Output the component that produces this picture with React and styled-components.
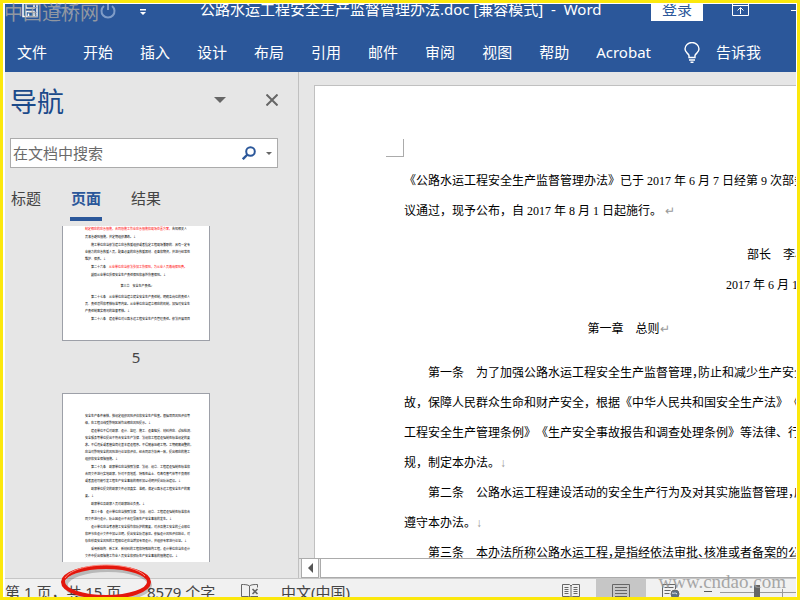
import React, { useState } from "react";
import styled, { createGlobalStyle } from "styled-components";

const GlobalStyle = createGlobalStyle`
  * {
    box-sizing: border-box;
  }

  body {
    margin: 0;
    font-family: "Noto Sans", "Noto Sans CJK SC", sans-serif;
    font-size: 15px;
    color: #444;
  }

  button,
  input {
    font: inherit;
    color: inherit;
    margin: 0;
    padding: 0;
    border: 0;
    background: none;
    white-space: nowrap;
  }

  p,
  h1,
  h2 {
    margin: 0;
    font-weight: normal;
  }
`;

const menuTabs = [
  "开始",
  "插入",
  "设计",
  "布局",
  "引用",
  "邮件",
  "审阅",
  "视图",
  "帮助",
  "Acrobat",
];

const navTabs = ["标题", "页面", "结果"];

const pageFive = [
  {
    red: true,
    continued: true,
    lines: ["制定相应的应急措施，合同段施工作业应急措施和现场处置方案，"],
    tail: "告知相关人",
  },
  { continued: true, lines: ["员紧急避险措施，并定期组织演练。↓"] },
  {
    lines: [
      "施工单位应当依法建立应急救援组织或者指定工程现场兼职的、具有一定专",
      "业能力的应急救援人员，配备必要的应急救援器材、设备和物资，并进行经常性",
      "维护、保养。↓",
    ],
  },
  {
    red: true,
    head: "第二十六条　",
    lines: ["从业单位应当依法参加工伤保险，为从业人员缴纳保险费。"],
  },
  { lines: ["鼓励从业单位投保安全生产责任保险和意外伤害保险。↓"] },
  { center: true, lines: ["第三章　安全生产责任↵"] },
  {
    lines: [
      "第二十七条　从业单位应当建立健全安全生产责任制，明确各岗位的责任人",
      "员、责任范围和考核标准等内容。从业单位应当建立相应的机制，加强对安全生",
      "产责任制落实情况的监督考核。↓",
    ],
  },
  { lines: ["第二十八条　建设单位对公路水运工程安全生产负管理责任。依法开展项目"] },
];

const pageSix = [
  {
    continued: true,
    lines: [
      "安全生产条件审核，按规定组织风险评估和安全生产检查。根据项目风险评估等",
      "级，在工程沿线受影响区域作出相应风险提示。↓",
    ],
  },
  {
    lines: [
      "建设单位不得对勘察、设计、监理、施工、设备租赁、材料供应、试验检测、",
      "安全服务等单位提出不符合安全生产法律、法规和工程建设强制性标准规定的要",
      "求。不得违反或者擅自简化基本建设程序。不得随意压缩工期。工期确需调整的，",
      "应当对影响安全的风险进行论证和评估，经合同双方协商一致，提出相应的施工",
      "组织和安全保障措施。↓",
    ],
  },
  {
    lines: [
      "第二十九条　勘察单位应当按照法律、法规、规章、工程建设强制性标准和",
      "合同文件进行实地勘察，针对不良地质、特殊性岩土、有毒有害气体等不良情形",
      "或者其他可能引发工程生产安全事故的情形加以说明并提出防治建议。↓",
    ],
  },
  {
    lines: [
      "勘察单位提交的勘察文件必须真实、准确，满足公路水运工程安全生产的需",
      "要。↓",
    ],
  },
  { lines: ["勘察单位及勘察人员对勘察结论负责。↓"] },
  {
    lines: [
      "第三十条　设计单位应当按照法律、法规、规章、工程建设强制性标准和合",
      "同文件进行设计，防止因设计不合理导致生产安全事故的发生。↓",
    ],
  },
  {
    lines: [
      "设计单位应当考虑施工安全操作和防护的需要，对涉及施工安全的重点部位",
      "和环节在设计文件中加以注明，提出安全防范意见。依据设计风险评估结论，对",
      "存在较高安全风险的工程部位还应当增加专项设计，并组织专家进行论证。↓",
    ],
  },
  {
    lines: [
      "采用新结构、新工艺、新材料的工程和特殊结构工程，设计单位应当在设计",
      "文件中提出保障施工作业人员安全和预防生产安全事故的措施建议。↓",
    ],
  },
];

const ThumbText = ({ paragraphs }) =>
  paragraphs.map((para) => (
    <ThumbPara
      key={para.lines[0]}
      $indent={!para.continued && !para.center}
      $center={para.center}
    >
      {para.lines.map((line, i) => (
        <ThumbLine key={line}>
          {i === 0 && para.head}
          {para.red ? <RedText>{line}</RedText> : line}
          {para.tail}
        </ThumbLine>
      ))}
    </ThumbPara>
  ));

const TitleBar = () => (
  <TitleRow>
    <QuickAccess>
      <IconButton aria-label="保存">
        <svg width="16" height="16" viewBox="0 0 16 16" fill="none" stroke="#fff">
          <path d="M1 0v12.500h14V0M4 12V7.500h8V12M6.500 12V9.500M4 0v4h8V0" strokeWidth="1.500" />
        </svg>
      </IconButton>
      <IconButton aria-label="撤消">
        <svg width="24" height="14" viewBox="0 0 24 14" fill="none" stroke="#5f82b8">
          <path d="M9 0L3 4l6 5M3 4h10c5 0 7 3 7 7" strokeWidth="2" />
        </svg>
      </IconButton>
      <RedoButton aria-label="重复">
        <svg width="18" height="16" viewBox="0 0 18 16" fill="none" stroke="#7f9cc8">
          <path d="M14 2a6.500 6.500 0 1 1-8 0M10 0v6" strokeWidth="2" />
        </svg>
      </RedoButton>
      <IconButton aria-label="自定义快速访问工具栏">
        <svg width="6" height="12" viewBox="0 0 6 12" fill="#fff">
          <path d="M0 5h6v1.500H0zM0 8h6L3 11z" />
        </svg>
      </IconButton>
    </QuickAccess>
    <Title>公路水运工程安全生产监督管理办法.doc [兼容模式]&nbsp; -&nbsp; Word</Title>
    <WindowTools>
      <SignIn>登录</SignIn>
      <IconButton aria-label="功能区显示选项">
        <svg width="17" height="12" viewBox="0 0 17 12" fill="none" stroke="#fff">
          <path d="M.5 0v11.500h16V0M0 1.500h17M8.500 10V4M5.500 6.500l3-3 3 3" />
        </svg>
      </IconButton>
      <IconButton aria-label="最小化">
        <svg width="5" height="12" viewBox="0 0 5 12" stroke="#fff">
          <path d="M0 6.500h5" />
        </svg>
      </IconButton>
    </WindowTools>
  </TitleRow>
);

const MenuBar = () => (
  <MenuRow>
    <FileTab>文件</FileTab>
    {menuTabs.map((tab) => (
      <MenuTab key={tab}>{tab}</MenuTab>
    ))}
    <TellMe>
      <svg width="16" height="21" viewBox="0 0 16 21" fill="none" stroke="#fff" strokeWidth="1.400">
        <path d="M5 15.500v-2C4.500 11.500 1 10.500 1 7a7 6.500 0 0 1 14 0c0 3.500-3.500 4.500-4 6.500v2zM5 18h6M6.500 20.200h3" />
      </svg>
      告诉我
    </TellMe>
  </MenuRow>
);

const Navigation = () => {
  const [active, setActive] = useState("页面");

  return (
    <NavPane>
      <NavHeader>
        <NavTitle>导航</NavTitle>
        <IconButton aria-label="任务窗格选项">
          <svg width="12" height="6" viewBox="0 0 12 6" fill="#666">
            <path d="M0 0h12L6 6z" />
          </svg>
        </IconButton>
        <IconButton aria-label="关闭">
          <svg width="12" height="12" viewBox="0 0 12 12" stroke="#666" strokeWidth="2">
            <path d="M.5 .5l11 11M11.500 .5l-11 11" />
          </svg>
        </IconButton>
      </NavHeader>
      <SearchBox>
        <SearchInput aria-label="在文档中搜索" placeholder="在文档中搜索" />
        <IconButton aria-label="搜索">
          <svg width="14" height="14" viewBox="0 0 14 14" fill="none" stroke="#2b579a">
            <circle cx="8.500" cy="5.500" r="4.300" strokeWidth="2" />
            <path d="M5.500 8.500L.8 13.200" strokeWidth="2.400" />
          </svg>
        </IconButton>
        <IconButton aria-label="搜索选项">
          <svg width="6" height="3" viewBox="0 0 6 3" fill="#666">
            <path d="M0 0h6L3 3z" />
          </svg>
        </IconButton>
      </SearchBox>
      <NavTabs>
        {navTabs.map((tab) => (
          <NavTab key={tab} $active={tab === active} onClick={() => setActive(tab)}>
            {tab}
          </NavTab>
        ))}
      </NavTabs>
      <Thumbs>
        <Thumb $cutTop>
          <ThumbText paragraphs={pageFive} />
        </Thumb>
        <PageNumber>5</PageNumber>
        <Thumb>
          <ThumbText paragraphs={pageSix} />
        </Thumb>
      </Thumbs>
    </NavPane>
  );
};

const Document = () => (
  <DocPane>
    <Canvas>
      <Page>
        <MarginCorner />
        <Para>
          <Line>《公路水运工程安全生产监督管理办法》已于 2017 年 6 月 7 日经第 9 次部务会</Line>
          <Line>
            议通过，现予公布，自 2017 年 8 月 1 日起施行。 <Mark>↵</Mark>
          </Line>
        </Para>
        <Para $align="right">
          <Line>部长　李小鹏</Line>
          <Line>2017 年 6 月 12 日</Line>
        </Para>
        <Para $align="center">
          <Line $indent>
            第一章　总则<Mark>↵</Mark>
          </Line>
        </Para>
        <Para>
          <Line $indent $tight>
            第一条　为了加强公路水运工程安全生产监督管理，防止和减少生产安全事
          </Line>
          <Line>故，保障人民群众生命和财产安全，根据《中华人民共和国安全生产法》《建设</Line>
          <Line>工程安全生产管理条例》《生产安全事故报告和调查处理条例》等法律、行政法</Line>
          <Line>
            规，制定本办法。<Mark>↓</Mark>
          </Line>
          <Line $indent $tight>
            第二条　公路水运工程建设活动的安全生产行为及对其实施监督管理，应当
          </Line>
          <Line>
            遵守本办法。<Mark>↓</Mark>
          </Line>
          <Line $indent $tight>
            第三条　本办法所称公路水运工程，是指经依法审批、核准或者备案的公路
          </Line>
        </Para>
      </Page>
    </Canvas>
    <ScrollBar>
      <ScrollButton aria-label="向左滚动">
        <svg width="5" height="10" viewBox="0 0 5 10" fill="#555">
          <path d="M5 0v10L0 5z" />
        </svg>
      </ScrollButton>
      <ScrollTrack />
    </ScrollBar>
  </DocPane>
);

const StatusBar = () => {
  const [zoom, setZoom] = useState(49);

  return (
    <StatusRow>
      <StatusItem $width={142}>第 1 页，共 15 页</StatusItem>
      <StatusItem $width={94}>8579 个字</StatusItem>
      <ProofButton aria-label="校对">
        <svg width="18" height="14" viewBox="0 0 18 14" fill="none" stroke="#666">
          <path d="M8.500 13.500V2C7 .5 3 .5.5.5v12h6.500l1.500 1 1.500-1h7M8.500 2c1.500-1.500 5-1.500 8-1.500v3" />
          <path d="M11.500 5l5 5M16.500 5l-5 5" strokeWidth="1.600" />
        </svg>
      </ProofButton>
      <StatusItem $width={72}>中文(中国)</StatusItem>
      <Views>
        <ViewButton aria-label="阅读视图">
          <svg width="18" height="14" viewBox="0 0 18 14" fill="none" stroke="#666">
            <path d="M9 1.500v12M.5.500h7L9 2l1.500-1.500h7v12h-7L9 13.500l-1.500-1H.5z" />
            <path d="M2.500 3.500h4M2.500 5.500h4M2.500 7.500h4M2.500 9.500h4M11.500 3.500h4M11.500 5.500h4M11.500 7.500h4M11.500 9.500h4" />
          </svg>
        </ViewButton>
        <ViewButton aria-label="页面视图" $active>
          <svg width="18" height="14" viewBox="0 0 18 14" fill="none" stroke="#666">
            <path d="M.5.500h17v13H.5zM3 3.500h12M3 6.500h12M3 9.500h12M3 12.500h12" />
          </svg>
        </ViewButton>
        <ViewButton aria-label="Web 版式视图">
          <svg width="18" height="14" viewBox="0 0 18 14" fill="none" stroke="#666">
            <path d="M13.500 5V.500H.5v13h8M2.500 3.500h9M2.500 6.500h6M2.500 9.500h5" />
            <circle cx="13" cy="10" r="4" fill="#5d7184" />
            <path d="M10 9c2 1 3-1 5 1" stroke="#f1f1f1" />
          </svg>
        </ViewButton>
        <ZoomOut aria-label="缩小">
          <svg width="9" height="2" viewBox="0 0 9 2" fill="#444">
            <path d="M0 0h9v1H0z" />
          </svg>
        </ZoomOut>
        <ZoomSlider
          type="range"
          aria-label="显示比例"
          value={zoom}
          onChange={(e) => setZoom(Number(e.target.value))}
        />
      </Views>
    </StatusRow>
  );
};

const App = () => {
  return (
    <Frame lang="zh-CN">
      <GlobalStyle />
      <Ribbon>
        <TitleBar />
        <MenuBar />
      </Ribbon>
      <Workspace>
        <Navigation />
        <Document />
      </Workspace>
      <StatusBar />
      <SiteName>中国道桥网</SiteName>
      <SiteAddress>www.cndao.com</SiteAddress>
      <Circle width="96" height="40" viewBox="0 0 96 40" fill="none">
        <ellipse cx="49" cy="25" rx="42" ry="15" stroke="#000" strokeOpacity=".2" strokeWidth="4" />
        <ellipse cx="47" cy="22" rx="43" ry="15" stroke="#e3170d" strokeWidth="4" />
        <path d="M6 18c6-9 24-13 42-13 16 0 32 4 38 11" stroke="#ff8a80" strokeWidth="1" />
      </Circle>
    </Frame>
  );
};

const Frame = styled.div`
  position: relative;
  display: flex;
  flex-direction: column;
  height: 100vh;
  overflow: hidden;
  border: 3px solid #fce80c;
  padding: 1px 1px 0 2px;
  background: #fff;
`;

const Ribbon = styled.header`
  flex: none;
  background: #2b579a;
  color: #fff;
  overflow: hidden;
`;

const TitleRow = styled.div`
  display: flex;
  align-items: flex-start;
  height: 28px;
  line-height: 10px;
`;

const IconButton = styled.button`
  display: flex;
  flex: none;
`;

const QuickAccess = styled.div`
  display: flex;
  flex: 0 0 195px;
  padding-left: 17px;
  gap: 14px;
`;

const RedoButton = styled(IconButton)`
  margin: 0 10px 0 8px;
`;

const Title = styled.h1`
  font-size: 15px;
  white-space: nowrap;
`;

const WindowTools = styled.div`
  display: flex;
  margin-left: auto;
  gap: 29px;

  button:last-child {
    margin-left: 13px;
  }
`;

const SignIn = styled.button`
  width: 52px;
  height: 17px;
  padding-bottom: 7px;
  background: #fff;
  color: #2b579a;
`;

const MenuRow = styled.nav`
  display: flex;
  align-items: center;
  height: 40px;
  padding: 0 12px;
  gap: 27px;
`;

const MenuTab = styled.button`
  line-height: 24px;
`;

const FileTab = styled(MenuTab)`
  margin-right: 9px;
`;

const TellMe = styled(MenuTab)`
  display: flex;
  align-items: center;
  margin-left: 6px;
  gap: 16px;
`;

const Workspace = styled.main`
  display: flex;
  flex: 1;
  min-height: 0;
  background: #e6e6e6;
`;

const NavPane = styled.aside`
  display: flex;
  flex: none;
  flex-direction: column;
  width: 294px;
  border-right: 1px solid #c0c0c0;
  padding: 8px 20px 16px 5px;
`;

const NavHeader = styled.div`
  display: flex;
  align-items: center;
  height: 40px;
  gap: 40px;
`;

const NavTitle = styled.h2`
  flex: 1;
  font-size: 27px;
  color: #1b4a8a;
`;

const SearchBox = styled.div`
  display: flex;
  flex: none;
  align-items: center;
  height: 30px;
  margin-top: 18px;
  padding: 0 5px 0 2px;
  gap: 10px;
  background: #fff;
  border: 1px solid #ababab;
`;

const SearchInput = styled.input`
  flex: 1;
  min-width: 0;
  outline: none;

  &::placeholder {
    color: #6a6a6a;
    opacity: 1;
  }
`;

const NavTabs = styled.div`
  display: flex;
  flex: none;
  margin-top: 18px;
  gap: 28px;
`;

const NavTab = styled.button`
  height: 35px;
  padding: 0 1px 7px;
  line-height: 24px;
  border-bottom: 4px solid ${({ $active }) => ($active ? "#2b579a" : "transparent")};
  color: ${({ $active }) => ($active ? "#2b579a" : "#444")};
  font-weight: ${({ $active }) => ($active ? 700 : 400)};
`;

const Thumbs = styled.div`
  display: flex;
  flex: 1;
  flex-direction: column;
  align-items: center;
  min-height: 0;
  margin-top: 5px;
  padding-right: 16px;
  overflow: hidden;
`;

const Thumb = styled.div`
  flex: none;
  width: 148px;
  height: ${({ $cutTop }) => ($cutTop ? "115px" : "210px")};
  padding: ${({ $cutTop }) => ($cutTop ? "0" : "19px")} 20px 0 22px;
  border: 1px solid #9da0a8;
  border-top-width: ${({ $cutTop }) => ($cutTop ? "0" : "1px")};
  background: #fff;
  color: #000;
  font-size: 3px;
  font-weight: 500;
  line-height: 7px;
  overflow: hidden;
`;

const ThumbPara = styled.p`
  margin-bottom: ${({ $center }) => ($center ? "4px" : "1px")};
  margin-top: ${({ $center }) => ($center ? "4px" : "0")};
  text-indent: ${({ $indent }) => ($indent ? "6px" : "0")};
  text-align: ${({ $center }) => ($center ? "center" : "left")};
`;

const ThumbLine = styled.span`
  display: block;
  white-space: nowrap;

  & + & {
    text-indent: 0;
  }
`;

const RedText = styled.span`
  color: #f00;
`;

const PageNumber = styled.div`
  flex: none;
  height: 52px;
  line-height: 32px;
`;

const DocPane = styled.section`
  display: flex;
  flex: 1;
  flex-direction: column;
  min-width: 0;
`;

const Canvas = styled.div`
  flex: 1;
  min-height: 0;
  padding: 13px 0 0 15px;
  overflow: hidden;
`;

const Page = styled.article`
  width: 595px;
  min-height: 842px;
  padding: 53px 89px;
  border: 1px solid #c0c0c0;
  background: #fff;
  color: #000;
  font-family: "Liberation Serif", "Noto Sans CJK SC", serif;
  font-size: 12px;
  line-height: 30px;
  text-spacing-trim: space-all;
`;

const MarginCorner = styled.div`
  width: 18px;
  height: 18px;
  margin: 0 0 9px -18px;
  border: solid #ababab;
  border-width: 0 1px 1px 0;
`;

const Para = styled.p`
  margin-bottom: 14px;
  text-align: ${({ $align }) => $align || "left"};
`;

const Line = styled.span`
  display: block;
  white-space: nowrap;
  text-indent: ${({ $indent }) => ($indent ? "24px" : "0")};
  font-feature-settings: ${({ $tight }) => ($tight ? '"halt"' : "normal")};
`;

const Mark = styled.span`
  display: inline-block;
  width: 0;
  color: #999;
  text-indent: 0;
`;

const ScrollBar = styled.div`
  display: flex;
  flex: none;
  height: 20px;
  padding-left: 2px;
  border-top: 1px solid #ababab;
`;

const ScrollButton = styled.button`
  display: flex;
  align-items: center;
  justify-content: center;
  width: 18px;
  background: #fff;
  border: 1px solid #ababab;
  border-top: 0;
`;

const ScrollTrack = styled.div`
  flex: 1;
  margin-left: 1px;
  background: #fff;
  border: solid #ababab;
  border-width: 0 0 1px 1px;
`;

const StatusRow = styled.footer`
  display: flex;
  flex: none;
  align-items: flex-start;
  height: 19px;
  border-top: 1px solid #c6c6c6;
  background: #f1f1f1;
  line-height: 26px;
  overflow: hidden;
`;

const StatusItem = styled.button`
  width: ${({ $width }) => $width}px;
  text-align: left;
`;

const ProofButton = styled(IconButton)`
  width: 40px;
  padding-top: 5px;
`;

const Views = styled.div`
  display: flex;
  margin-left: auto;
`;

const ViewButton = styled.button`
  display: flex;
  justify-content: center;
  width: 50px;
  height: 26px;
  padding-top: 5px;
  background: ${({ $active }) => ($active ? "#c6c6c6" : "transparent")};
`;

const ZoomOut = styled(IconButton)`
  width: 24px;
  padding: 12px 8px 0;
`;

const ZoomSlider = styled.input`
  width: 76px;
  height: 26px;
  appearance: none;
  background: linear-gradient(#999, #999) 62px 10px / 1px 8px no-repeat,
    linear-gradient(#999, #999) 0 13px / 100% 1px no-repeat;

  &::-webkit-slider-thumb {
    appearance: none;
    width: 6px;
    height: 14px;
    background: #666;
  }
`;

const SiteName = styled.div`
  position: absolute;
  top: -3px;
  left: 1px;
  color: #a3a3a3;
  font-family: "Noto Sans CJK SC", sans-serif;
  font-size: 19px;
  line-height: 24px;
  opacity: 0.85;
`;

const SiteAddress = styled.div`
  position: absolute;
  right: 11px;
  bottom: 3px;
  color: #999;
  font-family: "Liberation Serif", serif;
  font-size: 19px;
  line-height: 24px;
  opacity: 0.85;
`;

const Circle = styled.svg`
  position: absolute;
  left: 56px;
  bottom: -3px;
  pointer-events: none;
`;

export default App;
